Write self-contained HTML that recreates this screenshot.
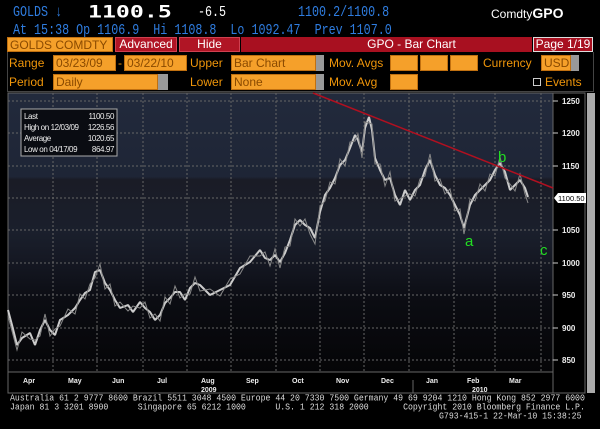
<!DOCTYPE html>
<html><head><meta charset="utf-8"><style>
*{margin:0;padding:0;box-sizing:border-box}
body{width:600px;height:429px;background:#000;overflow:hidden;position:relative;font-family:"Liberation Mono",monospace}
.a{position:absolute;white-space:pre}
.bl{color:#2f7de0;font-size:11.7px;transform:scaleY(1.3);transform-origin:0 0}
.or{color:#f0960a;font-family:"Liberation Sans",sans-serif;font-size:12px}
.ob{position:absolute;background:#f5a02a;border:1px solid #c07010;color:#8a4a00;font-family:"Liberation Sans",sans-serif;font-size:12px;line-height:14px;padding-left:2px;height:16px;overflow:hidden;white-space:nowrap}
.gb{position:absolute;background:#999;width:8px;height:16px}
.ft{color:#ddd;font-size:8.2px;font-family:"Liberation Mono",monospace;transform:scaleY(1.1);transform-origin:0 0}
</style></head><body>
<div class="a bl" style="left:13px;top:3px">GOLDS ↓</div>
<div class="a" style="left:88px;top:2px;color:#fff;font-size:16px;font-weight:bold;font-family:'DejaVu Sans Mono',monospace;transform:scale(1.45,1.05);transform-origin:0 0">1100.5</div>
<div class="a" style="left:198px;top:3px;color:#fff;font-size:11.7px;transform:scaleY(1.3);transform-origin:0 0">-6.5</div>
<div class="a bl" style="left:298px;top:3px">1100.2/1100.8</div>
<div class="a" style="left:491px;top:5px;color:#fff;font-size:12px;font-family:'Liberation Sans',sans-serif">Comdty<b style="font-size:14px">GPO</b></div>
<div class="a bl" style="left:13px;top:21px">At 15:38 Op 1106.9  Hi 1108.8  Lo 1092.47  Prev 1107.0</div>

<div class="ob" style="left:7px;top:37px;width:106px;height:15px">GOLDS COMDTY</div>
<div class="a" style="left:115px;top:37px;width:62px;height:15px;background:#b01525;border:1px solid #d04050;color:#fff;font:12px 'Liberation Sans',sans-serif;text-align:center;line-height:13px">Advanced</div>
<div class="a" style="left:179px;top:37px;width:61px;height:15px;background:#b01525;border:1px solid #d04050;color:#fff;font:12px 'Liberation Sans',sans-serif;text-align:center;line-height:13px">Hide</div>
<div class="a" style="left:241px;top:37px;width:291px;height:15px;background:#a81020;color:#fff;font:12px 'Liberation Sans',sans-serif;text-align:center;line-height:15px;padding-left:50px">GPO - Bar Chart</div>
<div class="a" style="left:533px;top:37px;width:60px;height:15px;background:#a81020;border:1px solid #ddd;color:#fff;font:12px 'Liberation Sans',sans-serif;text-align:center;line-height:13px">Page 1/19</div>
<div class="a" style="left:7px;top:52px;width:587px;height:40px;border:1px solid #444;border-top:none"></div>

<div class="a or" style="left:9px;top:56px">Range</div>
<div class="ob" style="left:53px;top:55px;width:63px">03/23/09</div>
<div class="a or" style="left:118px;top:56px">-</div>
<div class="ob" style="left:124px;top:55px;width:63px">03/22/10</div>
<div class="a or" style="left:190px;top:56px">Upper</div>
<div class="ob" style="left:231px;top:55px;width:85px">Bar Chart</div><div class="gb" style="left:316px;top:55px"></div>
<div class="a or" style="left:329px;top:56px">Mov. Avgs</div>
<div class="ob" style="left:390px;top:55px;width:28px"></div>
<div class="ob" style="left:420px;top:55px;width:28px"></div>
<div class="ob" style="left:450px;top:55px;width:28px"></div>
<div class="a or" style="left:483px;top:56px">Currency</div>
<div class="ob" style="left:541px;top:55px;width:30px">USD</div><div class="gb" style="left:571px;top:55px"></div>

<div class="a or" style="left:9px;top:75px">Period</div>
<div class="ob" style="left:53px;top:74px;width:105px">Daily</div><div class="gb" style="left:158px;top:74px;width:10px"></div>
<div class="a or" style="left:190px;top:75px">Lower</div>
<div class="ob" style="left:231px;top:74px;width:85px">None</div><div class="gb" style="left:316px;top:74px"></div>
<div class="a or" style="left:329px;top:75px">Mov. Avg</div>
<div class="ob" style="left:390px;top:74px;width:28px"></div>
<div class="a" style="left:533px;top:78px;width:8px;height:8px;border:1px solid #ccc"></div>
<div class="a or" style="left:545px;top:75px">Events</div>

<svg class="a" style="left:0;top:0" width="600" height="429">
<defs>
<linearGradient id="bg" x1="0" y1="0" x2="0" y2="1">
<stop offset="0" stop-color="#222a3c"/><stop offset="0.3" stop-color="#1e2536"/>
<stop offset="0.31" stop-color="#1a1c26"/><stop offset="0.5" stop-color="#1a1f2c"/>
<stop offset="0.6" stop-color="#151823"/><stop offset="0.75" stop-color="#0b0c12"/>
<stop offset="1" stop-color="#050507"/></linearGradient>
</defs>
<rect x="8" y="93" width="545" height="279" fill="url(#bg)"/>
<g stroke="#666" stroke-dasharray="2,2" stroke-width="1">
<line x1="8" x2="553" y1="101" y2="101"/><line x1="8" x2="553" y1="133" y2="133"/><line x1="8" x2="553" y1="166" y2="166"/><line x1="8" x2="553" y1="198" y2="198"/><line x1="8" x2="553" y1="230" y2="230"/><line x1="8" x2="553" y1="263" y2="263"/><line x1="8" x2="553" y1="295" y2="295"/><line x1="8" x2="553" y1="328" y2="328"/><line x1="8" x2="553" y1="360" y2="360"/>
<line y1="93" y2="372" x1="53" x2="53"/><line y1="93" y2="372" x1="97" x2="97"/><line y1="93" y2="372" x1="143" x2="143"/><line y1="93" y2="372" x1="187" x2="187"/><line y1="93" y2="372" x1="231" x2="231"/><line y1="93" y2="372" x1="276" x2="276"/><line y1="93" y2="372" x1="320" x2="320"/><line y1="93" y2="372" x1="364" x2="364"/><line y1="93" y2="372" x1="409" x2="409"/><line y1="93" y2="372" x1="454" x2="454"/><line y1="93" y2="372" x1="495" x2="495"/><line y1="93" y2="372" x1="541" x2="541"/>
</g>
<rect x="8" y="93" width="577" height="300" fill="none" stroke="#666"/>
<line x1="553" y1="93" x2="553" y2="393" stroke="#666"/>
<line x1="8" y1="372" x2="553" y2="372" stroke="#666"/>
<line x1="413" y1="380" x2="413" y2="393" stroke="#666"/>
<rect x="587" y="93" width="8" height="300" fill="#aaa"/>
<polyline fill="none" stroke="#ccc" stroke-width="2" stroke-linejoin="bevel" points="8,310 12,325 17,345 22,338 30,333 35,345 40,330 45,320 50,330 55,335 60,320 68,315 75,308 80,300 85,293 90,290 95,272 100,270 105,283 110,290 115,300 120,308 128,305 133,312 140,302 145,308 150,312 155,320 160,315 165,303 170,298 175,292 180,292 185,300 190,288 195,283 200,285 210,295 220,290 230,285 240,268 250,262 260,250 265,258 270,260 275,255 280,262 285,253 290,240 295,225 300,220 305,225 310,228 315,238 320,212 325,195 330,188 335,178 340,165 345,160 350,148 355,135 358,140 362,152 365,128 369,117 372,130 375,158 380,170 385,180 390,178 395,195 400,205 405,190 410,200 415,190 420,185 425,170 430,160 435,175 440,185 445,188 450,195 455,205 460,215 464,228 470,205 475,195 480,190 485,185 490,180 495,170 500,163 505,172 510,190 515,185 520,180 525,188 528,197"/>
<polyline fill="none" stroke="#888" stroke-width="1" points="8,316 12,331 17,350 22,332 30,339 35,340 40,336 45,314 50,336 55,329 60,326 68,309 75,314 80,294 85,299 90,284 95,278 100,264 105,289 110,284 115,306 120,302 128,311 133,306 140,308 145,302 150,318 155,314 160,321 165,297 170,304 175,286 180,298 185,294 190,294 195,277 200,291 210,289 220,296 230,279 240,274 250,256 260,256 265,252 270,266 275,249 280,268 285,247 290,246 295,219 300,226 305,219 310,234 315,244 320,206 325,201 330,182 335,184 340,159 345,166 350,142 355,141 358,134 362,158 365,122 369,123 372,124 375,164 380,164 385,186 390,172 395,201 400,199 405,196 410,194 415,196 420,179 425,176 430,154 435,181 440,179 445,194 450,189 455,211 460,209 464,234 470,199 475,201 480,184 485,191 490,174 495,176 500,157 505,178 510,184 515,191 520,174 525,194 528,203"/>
<line x1="313" y1="93" x2="553" y2="188" stroke="#b01020" stroke-width="1.5"/>
<g fill="#eee" font-family="Liberation Sans,sans-serif" font-size="8" font-weight="bold">
<text x="562" y="104">1250</text><text x="562" y="136">1200</text><text x="562" y="169">1150</text><text x="562" y="233">1050</text><text x="562" y="266">1000</text><text x="562" y="298">950</text><text x="562" y="331">900</text><text x="562" y="363">850</text>
<text x="23" y="383" font-size="7">Apr</text><text x="68" y="383" font-size="7">May</text><text x="112" y="383" font-size="7">Jun</text><text x="157" y="383" font-size="7">Jul</text><text x="201" y="383" font-size="7">Aug</text><text x="246" y="383" font-size="7">Sep</text><text x="292" y="383" font-size="7">Oct</text><text x="336" y="383" font-size="7">Nov</text><text x="381" y="383" font-size="7">Dec</text><text x="426" y="383" font-size="7">Jan</text><text x="467" y="383" font-size="7">Feb</text><text x="509" y="383" font-size="7">Mar</text>
<text x="201" y="392" font-size="7">2009</text><text x="472" y="392" font-size="7">2010</text>
</g>
<g stroke="#ccc"><line x1="553" y1="101" x2="558" y2="101"/><line x1="553" y1="133" x2="558" y2="133"/><line x1="553" y1="166" x2="558" y2="166"/><line x1="553" y1="230" x2="558" y2="230"/><line x1="553" y1="263" x2="558" y2="263"/><line x1="553" y1="295" x2="558" y2="295"/><line x1="553" y1="328" x2="558" y2="328"/><line x1="553" y1="360" x2="558" y2="360"/></g>
<polygon points="554,198 558,193 586,193 586,203 558,203" fill="#fff"/>
<text x="558" y="201" font-family="Liberation Sans,sans-serif" font-size="7.5" fill="#000">1100.50</text>
<g fill="#22dd22" font-family="Liberation Sans,sans-serif" font-size="15"><text x="465" y="246">a</text><text x="498" y="162">b</text><text x="540" y="255">c</text></g>
<rect x="21" y="109" width="96" height="47" fill="#0a0c12" stroke="#aaa"/>
<g fill="#eee" font-family="Liberation Sans,sans-serif" font-size="8" letter-spacing="-0.4">
<text x="24" y="119">Last</text><text x="114" y="119" text-anchor="end">1100.50</text>
<text x="24" y="130">High on 12/03/09</text><text x="114" y="130" text-anchor="end">1226.56</text>
<text x="24" y="141">Average</text><text x="114" y="141" text-anchor="end">1020.65</text>
<text x="24" y="152">Low on 04/17/09</text><text x="114" y="152" text-anchor="end">864.97</text>
</g>
</svg>
<div class="a ft" style="left:10px;top:394px">Australia 61 2 9777 8600 Brazil 5511 3048 4500 Europe 44 20 7330 7500 Germany 49 69 9204 1210 Hong Kong 852 2977 6000</div>
<div class="a ft" style="left:10px;top:403px">Japan 81 3 3201 8900      Singapore 65 6212 1000      U.S. 1 212 318 2000       Copyright 2010 Bloomberg Finance L.P.</div>
<div class="a ft" style="left:439px;top:412px">G793-415-1 22-Mar-10 15:38:25</div>
</body></html>
